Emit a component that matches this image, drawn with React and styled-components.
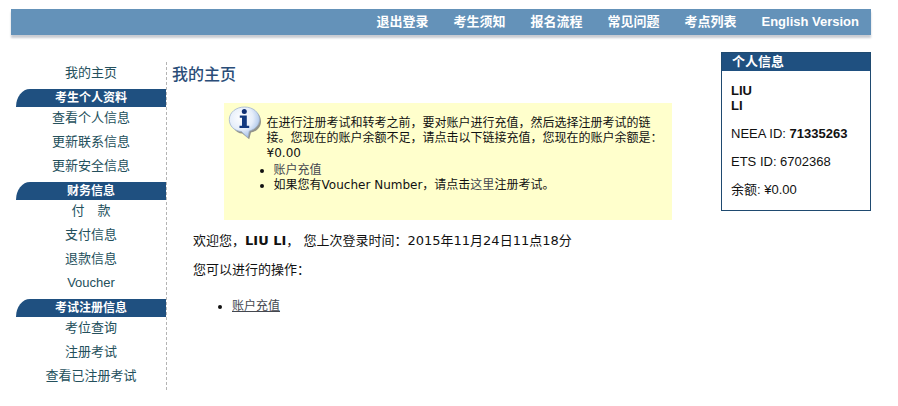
import React from 'react';
import styled, { createGlobalStyle } from 'styled-components';

const navLinks = ['退出登录', '考生须知', '报名流程', '常见问题', '考点列表', 'English Version'];

const menu = [
  { title: '考生个人资料', items: ['查看个人信息', '更新联系信息', '更新安全信息'] },
  { title: '财务信息', items: ['付　款', '支付信息', '退款信息', 'Voucher'] },
  { title: '考试注册信息', items: ['考位查询', '注册考试', '查看已注册考试'] },
];

const InfoIcon = () => (
  <svg width="34" height="34" viewBox="0 0 34 34" aria-hidden="true">
    <defs>
      <radialGradient id="bubble" cx="0.4" cy="0.35" r="0.7">
        <stop offset="0" stopColor="#ffffff" />
        <stop offset="0.55" stopColor="#e6eefa" />
        <stop offset="1" stopColor="#9dbbe6" />
      </radialGradient>
    </defs>
    <path
      d="M18 3c8.500 0 15 5.200 15 12.400 0 5.600-4 9.800-10 11.200l-1.800 6.600-7-5.600C7.500 26.600 4 21.600 4 15.400 4 8.200 9.500 3 18 3z"
      fill="#6f7076"
      opacity="0.75"
    />
    <path
      d="M16.500 1C25 1 31.500 6.300 31.500 13.300c0 5.600-4.200 10.200-10.200 11.700l-1.500 6.600-6.300-6C6 24.800 1.300 20 1.300 13.500 1.300 6.500 8 1 16.500 1z"
      fill="url(#bubble)"
      stroke="#9fb2cf"
      strokeWidth="0.8"
    />
    <circle cx="16.300" cy="5.500" r="2.500" fill="#0f2f72" />
    <path d="M11.800 9.500h7v10.200h2.400v2.300h-9.700v-2.300h2.500v-7.900h-2.200z" fill="#12397f" />
  </svg>
);

const App = () => {
  return (
    <>
      <GlobalStyle />
      <PageStyled>
        <TopBar>
          {navLinks.map((link) => (
            <NavLink href="#" key={link}>
              {link}
            </NavLink>
          ))}
        </TopBar>

        <Columns>
          <Sidebar>
            <MenuList>
              <li>
                <MenuLink href="#">我的主页</MenuLink>
              </li>
            </MenuList>
            {menu.map((group) => (
              <React.Fragment key={group.title}>
                <MenuTitle>{group.title}</MenuTitle>
                <MenuList>
                  {group.items.map((item) => (
                    <li key={item}>
                      <MenuLink href="#">{item}</MenuLink>
                    </li>
                  ))}
                </MenuList>
              </React.Fragment>
            ))}
          </Sidebar>

          <Main>
            <PageTitle>我的主页</PageTitle>
            <Content>
              <Notice>
                <InfoIcon />
                <NoticeText>
                  <p>
                    在进行注册考试和转考之前，要对账户进行充值，然后选择注册考试的链接。您现在的账户余额不足，请点击以下链接充值，您现在的账户余额是：¥0.00
                  </p>
                  <ul>
                    <li>
                      <TextLink href="#">账户充值</TextLink>
                    </li>
                    <li>
                      如果您有Voucher Number，请点击<TextLink href="#">这里</TextLink>注册考试。
                    </li>
                  </ul>
                </NoticeText>
              </Notice>

              <Paragraph>
                欢迎您，<strong>LIU LI</strong>， 您上次登录时间：2015年11月24日11点18分
              </Paragraph>
              <Paragraph>您可以进行的操作：</Paragraph>
              <ActionList>
                <li>
                  <TextLink href="#" $underline>
                    账户充值
                  </TextLink>
                </li>
              </ActionList>
            </Content>
          </Main>

          <Profile>
            <ProfileTitle>个人信息</ProfileTitle>
            <ProfileBody>
              <p>
                <strong>
                  LIU
                  <br />
                  LI
                </strong>
              </p>
              <p>
                NEEA ID: <strong>71335263</strong>
              </p>
              <p>ETS ID: 6702368</p>
              <p>余额: ¥0.00</p>
            </ProfileBody>
          </Profile>
        </Columns>
      </PageStyled>
    </>
  );
};

const GlobalStyle = createGlobalStyle`
  * {
    box-sizing: border-box;
  }

  body {
    margin: 0;
    background: #fff;
  }

  p, h1, h2, ul {
    margin: 0;
    padding: 0;
  }
`;

const PageStyled = styled.div`
  padding: 9px 27px 0 11px;
  color: #111;
  font-family: 'Liberation Sans', 'Noto Sans CJK SC', sans-serif;
  font-size: 13px;
`;

const TopBar = styled.nav`
  display: flex;
  justify-content: flex-end;
  gap: 25px;
  padding: 0 12px;
  background: #6492b9;
  box-shadow: 0 3px 2px #c9ccd2;
  line-height: 26px;
`;

const NavLink = styled.a`
  color: #fff;
  font-weight: bold;
  text-decoration: none;
`;

const Columns = styled.div`
  display: flex;
  align-items: flex-start;
  padding-top: 17px;
`;

const Sidebar = styled.aside`
  flex: 0 0 151px;
  margin: 10px 0 0 5px;
  padding-top: 2px;
  border-right: 1px dashed #b4b4b4;
`;

const MenuTitle = styled.h2`
  border-top-left-radius: 14px 18px;
  background: #1f5080;
  color: #fff;
  font-size: 12px;
  line-height: 18px;
  text-align: center;
`;

const MenuList = styled.ul`
  display: flex;
  flex-direction: column;
  gap: 6px;
  padding: 2px 0 7px;
  list-style: none;
  line-height: 18px;
  text-align: center;

  &:first-child {
    padding-top: 0;
  }

  &:last-child {
    padding-bottom: 5px;
  }
`;

const MenuLink = styled.a`
  color: #24505c;
  text-decoration: none;
`;

const Main = styled.main`
  flex: 1;
  min-width: 0;
  padding: 13px 18px 0 5px;
`;

const PageTitle = styled.h1`
  color: #2a4d78;
  font-size: 16px;
  font-weight: 500;
  line-height: 20px;
`;

const Content = styled.div`
  padding: 18px 0 0 21px;
  font-family: 'DejaVu Sans', 'Noto Sans CJK SC', sans-serif;
`;

const Notice = styled.section`
  display: flex;
  align-items: flex-start;
  gap: 5px;
  width: 88%;
  margin: 0 auto 13px;
  padding: 3px 8px 27px 4px;
  background: #ffc;
  font-size: 12px;
  line-height: 15px;

  svg {
    flex: none;
  }
`;

const NoticeText = styled.div`
  flex: 1;
  padding-top: 10px;

  ul {
    margin-top: 2px;
    padding-left: 7px;
  }
`;

const Paragraph = styled.p`
  margin-bottom: 13px;
  line-height: 16px;
`;

const ActionList = styled.ul`
  margin-top: 20px;
  padding-left: 39px;
  font-size: 12px;
  line-height: 16px;
`;

const TextLink = styled.a`
  color: #44474f;
  text-decoration: ${(props) => (props.$underline ? 'underline' : 'none')};
`;

const Profile = styled.aside`
  flex: 0 0 150px;
  border: 1px solid #1f4a70;
`;

const ProfileTitle = styled.h2`
  padding-left: 10px;
  background: #1f5080;
  color: #fff;
  font-size: 13px;
  line-height: 18px;
`;

const ProfileBody = styled.div`
  display: flex;
  flex-direction: column;
  gap: 13px;
  padding: 12px 9px 13px;
  line-height: 15px;
`;

export default App;
